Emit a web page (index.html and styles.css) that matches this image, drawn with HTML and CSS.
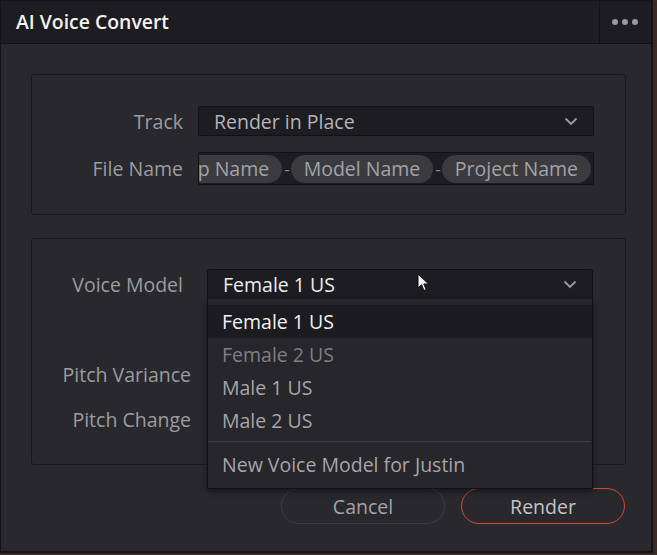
FILE: index.html
```html
<!DOCTYPE html>
<html lang="en">

<head>
    <meta charset="UTF-8" />
    <meta name="viewport" content="width=device-width, initial-scale=1.0" />
    <title>AI Voice Convert</title>
    <link rel="stylesheet" href="styles.css">
</head>

<body>
    <div class="dialog">
        <div class="titlebar">
            <div class="title">AI Voice Convert</div>
            <div class="menu-btn">
                <span class="dot"></span>
                <span class="dot"></span>
                <span class="dot"></span>
            </div>
        </div>

        <div class="content">
            <div class="panel panel-output">
                <div class="row">
                    <div class="label">Track</div>
                    <div class="select">
                        <span>Render in Place</span>
                        <svg class="chevron" width="14" height="9" viewBox="0 0 14 9">
                            <path d="M1.5 1.5 L7 7 L12.5 1.5" fill="none" stroke="#9c9ba0" stroke-width="1.8" />
                        </svg>
                    </div>
                </div>
                <div class="row">
                    <div class="label">File Name</div>
                    <div class="tokens">
                        <div class="token-track">
                            <span class="token">Clip Name</span>
                            <span class="sep">-</span>
                            <span class="token">Model Name</span>
                            <span class="sep">-</span>
                            <span class="token">Project Name</span>
                        </div>
                    </div>
                </div>
            </div>

            <div class="panel panel-voice">
                <div class="row">
                    <div class="label">Voice Model</div>
                    <div class="select-wrap">
                        <div class="select select-open">
                            <span>Female 1 US</span>
                            <svg class="chevron" width="14" height="9" viewBox="0 0 14 9">
                                <path d="M1.5 1.5 L7 7 L12.5 1.5" fill="none" stroke="#9c9ba0" stroke-width="1.8" />
                            </svg>
                        </div>
                        <div class="popup">
                            <div class="item item-active">Female 1 US</div>
                            <div class="item item-dim">Female 2 US</div>
                            <div class="item">Male 1 US</div>
                            <div class="item">Male 2 US</div>
                            <div class="divider"></div>
                            <div class="item">New Voice Model for Justin</div>
                        </div>
                        <svg class="cursor" width="14" height="20" viewBox="0 0 14 20">
                            <path d="M1 1 L1 15 L4.5 11.8 L7 17.5 L9.2 16.5 L6.8 11 L11.5 11 Z" fill="#f4f4f4" stroke="#111" stroke-width="1" />
                        </svg>
                    </div>
                </div>
                <div class="row row-pitch row-variance">
                    <div class="label">Pitch Variance</div>
                </div>
                <div class="row row-pitch">
                    <div class="label">Pitch Change</div>
                </div>
            </div>

            <div class="actions">
                <button class="btn">Cancel</button>
                <button class="btn btn-primary">Render</button>
            </div>
        </div>
    </div>
</body>

</html>
```

FILE: styles.css
```css
* {
    box-sizing: border-box;
    margin: 0;
    padding: 0;
}

body {
    width: 657px;
    height: 555px;
    background: #3a2a21;
    font-family: "Open Sans", "DejaVu Sans", sans-serif;
    overflow: hidden;
}

.dialog {
    width: 653px;
    height: 553px;
    background: #29282d;
    border-left: 1px solid #141317;
    border-right: 2px solid #141317;
    border-bottom: 2px solid #141317;
    display: flex;
    flex-direction: column;
}

.titlebar {
    height: 44px;
    flex-shrink: 0;
    display: flex;
    background: #1d1c21;
    border-top: 1px solid #151418;
    border-bottom: 1px solid #121115;
}

.title {
    flex: 1;
    padding-left: 15px;
    color: #f2f2f2;
    font-size: 19.4px;
    font-weight: 600;
    line-height: 42px;
}

.menu-btn {
    width: 52px;
    border-left: 1px solid #111014;
    display: flex;
    align-items: center;
    justify-content: center;
    gap: 4px;
    padding-right: 2px;
}

.dot {
    width: 6px;
    height: 6px;
    border-radius: 50%;
    background: #9a999e;
}

.content {
    padding: 30px 0 0 30px;
    display: flex;
    flex-direction: column;
}

.panel {
    width: 595px;
    border: 1px solid #18171b;
    border-radius: 3px;
    display: flex;
    flex-direction: column;
}

.panel-output {
    height: 141px;
    padding-top: 31px;
    gap: 16px;
}

.panel-voice {
    margin-top: 23px;
    height: 227px;
    padding-top: 30px;
}

.row {
    display: flex;
    align-items: center;
}

.label {
    width: 151px;
    text-align: right;
    color: #9c9ba0;
    font-size: 19.5px;
    white-space: nowrap;
}

.panel-output .label {
    margin-right: 15px;
}

.panel-voice .label {
    margin-right: 24px;
}

.select {
    width: 396px;
    height: 30px;
    background: #1d1c20;
    border: 1px solid #111014;
    border-radius: 2px;
    display: flex;
    align-items: center;
    justify-content: space-between;
    padding: 0 15px 0 15px;
    color: #b4b3b8;
    font-size: 19.5px;
}

.select-wrap {
    position: relative;
}

.select-open {
    width: 386px;
    color: #ececec;
    border-bottom-left-radius: 0;
    border-bottom-right-radius: 0;
}

.tokens {
    width: 396px;
    height: 33px;
    background: #1d1c20;
    border: 1px solid #111014;
    border-radius: 2px;
    overflow: hidden;
    display: flex;
    align-items: center;
    justify-content: flex-end;
    padding-right: 2px;
}

.token-track {
    display: flex;
    align-items: center;
    flex-shrink: 0;
}

.token {
    height: 28px;
    line-height: 27px;
    padding: 0 13px;
    border-radius: 14px;
    background: #3a3a3f;
    color: #a3a2a7;
    font-size: 19.5px;
    white-space: nowrap;
}

.sep {
    color: #8e8d92;
    font-size: 17px;
    padding: 0 1px 0 2px;
}

.popup {
    position: absolute;
    top: 29px;
    left: 0;
    width: 386px;
    height: 191px;
    background: #27262b;
    border: 1px solid #111014;
    border-top: 1px solid #19181c;
    box-shadow: 0 3px 6px rgba(0, 0, 0, 0.45);
    padding-top: 6px;
    z-index: 5;
}

.item {
    height: 33px;
    line-height: 33px;
    padding-left: 14px;
    color: #a6a5aa;
    font-size: 19.5px;
    white-space: nowrap;
}

.item-active {
    background: #1c1b1f;
    color: #f0f0f0;
}

.item-dim {
    color: #7f7e83;
}

.divider {
    height: 1px;
    margin: 4px 1px 6px 0;
    background: #3d3c42;
}

.cursor {
    position: absolute;
    left: 210px;
    top: 4px;
    z-index: 6;
}

.row-pitch .label {
    width: 159px;
}

.row-variance {
    margin-top: 61px;
}

.row-pitch {
    height: 28px;
}

.row-pitch + .row-pitch {
    margin-top: 17px;
}

.actions {
    margin-top: 23px;
    padding-left: 250px;
    display: flex;
    gap: 16px;
}

.btn {
    width: 164px;
    height: 36px;
    border-radius: 18px;
    border: 1.5px solid #3e3d43;
    background: transparent;
    color: #a3a2a7;
    font-family: "Open Sans", "DejaVu Sans", sans-serif;
    font-size: 19.5px;
}

.btn-primary {
    border-color: #d5463f;
    color: #c4c3c8;
}
```
